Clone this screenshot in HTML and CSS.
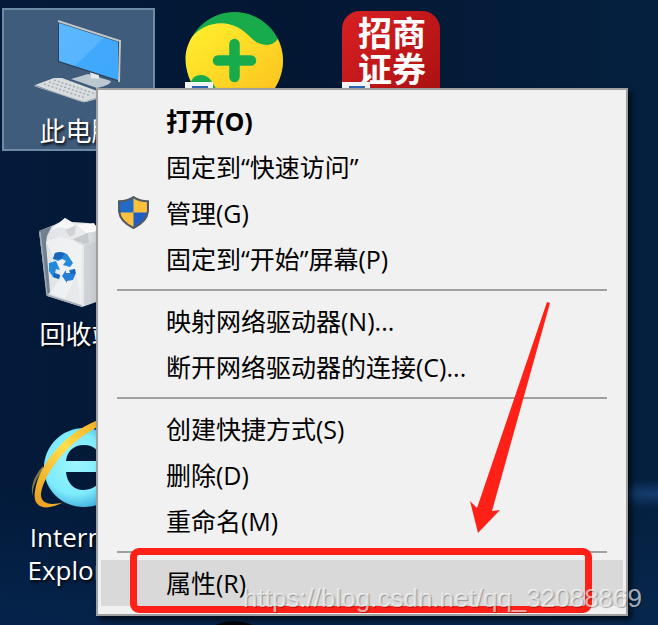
FILE: index.html
```html
<!DOCTYPE html>
<html lang="zh-CN">

<head>
    <meta charset="UTF-8">
    <meta name="viewport" content="width=device-width, initial-scale=1.0">
    <title>桌面</title>
    <link rel="stylesheet" href="styles.css">
</head>

<body>
    <main class="desktop">
        <div class="icons">
            <div class="icon computer selected">
                <svg viewBox="0 0 149 105" aria-hidden="true">
                    <defs>
                        <linearGradient id="screen" x1="0" y1="0" x2="1" y2="1">
                            <stop offset="0" stop-color="#5cb8ff" />
                            <stop offset="0.5" stop-color="#58b5fd" />
                            <stop offset="0.52" stop-color="#41a9fb" />
                            <stop offset="1" stop-color="#3ea8ff" />
                        </linearGradient>
                    </defs>
                    <path d="M67 69L84 64L107 71Q107 75 93 78Z" fill="#bcc8d0" />
                    <path d="M86 62L95 64V69L87 68Z" fill="#e3e9ec" />
                    <path d="M31 75L50 68L58 68L96 82V88L82 92L75 91Z" fill="#d9dde0" />
                    <path d="M40 74L81 88M45 72L87 86M50 70L92 84" stroke="#a3acb3" stroke-width="1.5" stroke-dasharray="2 2" />
                    <path d="M31 75V76L80 92L92 88" fill="none" stroke="#aab2b9" />
                    <path d="M54 10L117 30L116 72L54 52Z" fill="#2b4258" />
                    <path d="M55 13L114 32V70L55 51Z" fill="url(#screen)" />
                    <path d="M54 11L116 31L115 72" fill="none" stroke="#c2c7ca" stroke-width="2" />
                </svg>
                <span class="label">此电脑</span>
            </div>

            <div class="icon safe">
                <svg viewBox="0 0 149 105" aria-hidden="true">
                    <defs>
                        <linearGradient id="yellow" x1="0" y1="0" x2="1" y2="1">
                            <stop offset="0" stop-color="#fff12f" />
                            <stop offset="1" stop-color="#fcc01d" />
                        </linearGradient>
                    </defs>
                    <circle cx="74.5" cy="50.5" r="48.5" fill="#18ab4c" />
                    <path d="M32 27C42 14 62 9 77 17C91 24 93 35 107 35C113 35 116 31 118 29C126 46 124 63 115 78L104 90H65C55 84 54 65 41 65C34 65 32 69 31 72C25 59 22 43 32 27Z" fill="url(#yellow)" />
                    <path d="M74.500 34V67M58 50.500H91" stroke="#18ab4c" stroke-width="10.500" stroke-linecap="round" />
                    <rect x="25" y="72" width="28" height="28" fill="#f3f5f7" />
                    <path d="M33 80V77H47V88" fill="none" stroke="#2e66b5" stroke-width="2" />
                </svg>
            </div>

            <div class="icon broker">
                <svg viewBox="0 0 149 105" aria-hidden="true">
                    <defs>
                        <linearGradient id="red" x1="0" y1="0" x2="1" y2="1">
                            <stop offset="0" stop-color="#d92023" />
                            <stop offset="1" stop-color="#a60f10" />
                        </linearGradient>
                    </defs>
                    <rect x="26" y="1" width="98" height="99" rx="18" fill="url(#red)" />
                    <text class="broker-name" x="42" y="36">招商</text>
                    <text class="broker-name" x="42" y="72">证券</text>
                    <rect x="26" y="72" width="28" height="28" fill="#f3f5f7" />
                    <path d="M34 80V77H48V88" fill="none" stroke="#2e66b5" stroke-width="2" />
                </svg>
            </div>

            <div class="icon recycle">
                <svg viewBox="0 0 149 105" aria-hidden="true">
                    <defs>
                        <linearGradient id="bin" x1="0" y1="0" x2="1" y2="0">
                            <stop offset="0" stop-color="#dfe2e5" />
                            <stop offset="0.55" stop-color="#e9ebed" />
                            <stop offset="1" stop-color="#a9b0b6" />
                        </linearGradient>
                    </defs>
                    <path d="M35 18L50 12L56 9L61 5L68 9L84 10L91 12L112 22L106 84L78 94L43 83Z" fill="url(#bin)" />
                    <path d="M35 18L48 13L43 23L42 30L46 79L43 83Z" fill="#71808f" />
                    <path d="M47 17L61 5L72 13L67 17L56 14Z" fill="#f6f6f6" />
                    <path d="M73 12L90 10L94 18L82 20Z" fill="#fafafa" />
                    <path d="M61 17L72 12L71 21L66 24Z" fill="#d0d3d5" />
                    <path d="M69 26L84 20L85 30L76 32Z" fill="#c6cacc" />
                    <path d="M42 28L57 24L78 30L77 93L73 61L61 86L46 80L58 63Z" fill="#f5f6f7" opacity="0.6" />
                    <path d="M80 32L112 24L106 84L80 93Z" fill="#c1c6ca" opacity="0.55" />
                    <path d="M36 19L43 82L78 93" fill="none" stroke="#a2abb3" stroke-width="1.5" />
                    <path d="M51 40L57 39L63 41L67 47L69 50L66 54L59 52L62 48L58 46L54 48L49 46Z" fill="#2689d8" />
                    <path d="M45 50L52 48L56 57L52 56L51 60L56 62L55 66L49 64L45 58Z" fill="#2189dc" />
                    <path d="M58 63L62 57V60L66 60L65 57L71 56L72 60L69 67L63 68V70Z" fill="#2780d8" />
                    <path d="M51 40L55 39L61 40L57 46L49 46ZM50 60L56 62L55 66L49 64ZM66 58L71 56L71 61L67 61Z" fill="#1a64be" />
                </svg>
                <span class="label">回收站</span>
            </div>

            <div class="icon browser">
                <svg viewBox="0 0 149 105" aria-hidden="true">
                    <defs>
                        <radialGradient id="ie" cx="0.4" cy="0.45" r="0.6">
                            <stop offset="0" stop-color="#9cf6ff" />
                            <stop offset="0.65" stop-color="#7eebfd" />
                            <stop offset="1" stop-color="#3cabdc" />
                        </radialGradient>
                        <linearGradient id="ring" x1="1" y1="0" x2="0" y2="1">
                            <stop offset="0" stop-color="#f0a51f" />
                            <stop offset="0.45" stop-color="#ffe04a" />
                            <stop offset="1" stop-color="#e99a20" />
                        </linearGradient>
                    </defs>
                    <path fill-rule="evenodd" d="M80 12C102 12 119 30 119 56H62C63 67 70 74 79 74C87 74 94 70 97 64H117C112 80 98 91 80 91C58 91 40 74 40 52C40 30 58 12 80 12ZM62 45C63 35 70 29 80 29C90 29 96 35 98 45Z" fill="url(#ie)" />
                    <path d="M39 54C32 63 28 72 29 80C26 72 29 61 39 50Z" fill="#77734b" />
                    <path d="M100 2C64 13 35 47 31 75C28 92 41 96 60 86C44 91 36 86 37 77C41 55 67 22 100 8Z" fill="url(#ring)" />
                </svg>
                <span class="label">Internet Explorer</span>
            </div>

            <div class="icon hidden-app">
                <svg viewBox="0 0 149 105" aria-hidden="true">
                    <circle cx="74" cy="46" r="44" fill="#02050a" />
                </svg>
            </div>
        </div>

        <div class="menu" role="menu">
            <button class="item default" role="menuitem">打开(O)</button>
            <button class="item" role="menuitem">固定到“快速访问”</button>
            <button class="item" role="menuitem">
                <svg class="shield" viewBox="0 0 30 32" aria-hidden="true">
                    <path d="M15 1Q21 5 29 5V15Q28 25 15 31Q2 25 1 15V5Q9 5 15 1Z" fill="#ffc03c" />
                    <path d="M15 1V16H1V5Q9 5 15 1Z" fill="#226bc7" />
                    <path d="M15 16H29Q28 25 15 31Z" fill="#225dc3" />
                    <path d="M15 1Q21 5 29 5V15Q28 25 15 31Q2 25 1 15V5Q9 5 15 1Z" fill="none" stroke="#525960" stroke-width="2" />
                </svg>
                管理(G)
            </button>
            <button class="item" role="menuitem">固定到“开始”屏幕(P)</button>
            <hr class="separator">
            <button class="item" role="menuitem">映射网络驱动器(N)...</button>
            <button class="item" role="menuitem">断开网络驱动器的连接(C)...</button>
            <hr class="separator">
            <button class="item" role="menuitem">创建快捷方式(S)</button>
            <button class="item" role="menuitem">删除(D)</button>
            <button class="item" role="menuitem">重命名(M)</button>
            <hr class="separator">
            <button class="item active" role="menuitem">属性(R)</button>
        </div>

        <!-- Red marks pointing at the properties entry -->
        <svg class="arrow" viewBox="0 0 80 232" aria-hidden="true">
            <path d="M77 0L80 1L22 209L30 208L8 231L0 199L7 206Z" fill="#ff2118" />
        </svg>
        <div class="highlight"></div>
        <p class="watermark">https://blog.csdn.net/qq_32088869</p>
    </main>
</body>

</html>
```
FILE: styles.css
```css
* {
    box-sizing: border-box;
}

body {
    margin: 0;
    font-family: "Open Sans", "Noto Sans CJK SC", sans-serif;
    font-size: 25px;
}

.desktop {
    position: relative;
    height: 100vh;
    overflow: hidden;
    background-color: #031d3d;
    background-image:
        radial-gradient(ellipse 100px 14px at 100% 79%, rgba(30, 80, 140, 0.6), transparent),
        linear-gradient(0deg, rgba(8, 50, 100, 0.4), transparent 22%),
        linear-gradient(90deg, #031a3a 0%, #031733 45%, #05203f 100%);
}

/* Desktop icons */
.icons {
    display: grid;
    grid-template-columns: repeat(3, 153px);
    grid-auto-rows: 143px;
    gap: 60px 3px;
    padding: 8px 0 0 2px;
}

.icon {
    border: 2px solid transparent;
    color: #fff;
    text-align: center;
}

.icon svg {
    display: block;
    width: 100%;
}

.icon.selected {
    background-color: #405c7c;
    border-color: #6f8aa5;
}

.recycle,
.browser {
    grid-column: 1;
}

.hidden-app {
    grid-column: 2;
    grid-row: 4;
}

.label {
    display: block;
    padding: 0 16px;
    font-size: 26px;
    line-height: 33px;
    text-shadow: 1px 2px 3px #000;
}

.broker-name {
    fill: #fff;
    font-family: "Noto Sans CJK SC", sans-serif;
    font-size: 34px;
    font-weight: bold;
}

/* Context menu */
.menu {
    position: absolute;
    top: 88px;
    left: 96px;
    width: 532px;
    padding: 8px 3px;
    background-color: #f1f1f1;
    border: 2px solid #a0a0a0;
    box-shadow: 4px 4px 5px rgba(0, 0, 0, 0.6);
}

.item {
    position: relative;
    display: block;
    width: 100%;
    height: 46px;
    padding: 0 0 0 65px;
    border: none;
    background-color: transparent;
    color: #000;
    font: inherit;
    line-height: 46px;
    text-align: left;
}

.item.default {
    font-weight: bold;
}

.item.active,
.item:hover {
    background-color: #d9d9d9;
}

.shield {
    position: absolute;
    top: 6px;
    left: 17px;
    width: 31px;
    height: 33px;
}

.separator {
    height: 2px;
    margin: 7px 16px;
    border: none;
    background-color: #a0a0a0;
}

/* Annotations */
.arrow {
    position: absolute;
    top: 302px;
    left: 470px;
    width: 80px;
    height: 232px;
}

.highlight {
    position: absolute;
    top: 548px;
    left: 130px;
    width: 462px;
    height: 65px;
    border: 7px solid #ff2118;
    border-radius: 9px;
}

.watermark {
    position: absolute;
    top: 583px;
    left: 243px;
    margin: 0;
    color: rgba(255, 255, 255, 0.65);
    font-family: "Liberation Sans", sans-serif;
    font-size: 26px;
    line-height: 30px;
    text-shadow: 1px 1px 1px rgba(0, 0, 0, 0.3);
}
```
